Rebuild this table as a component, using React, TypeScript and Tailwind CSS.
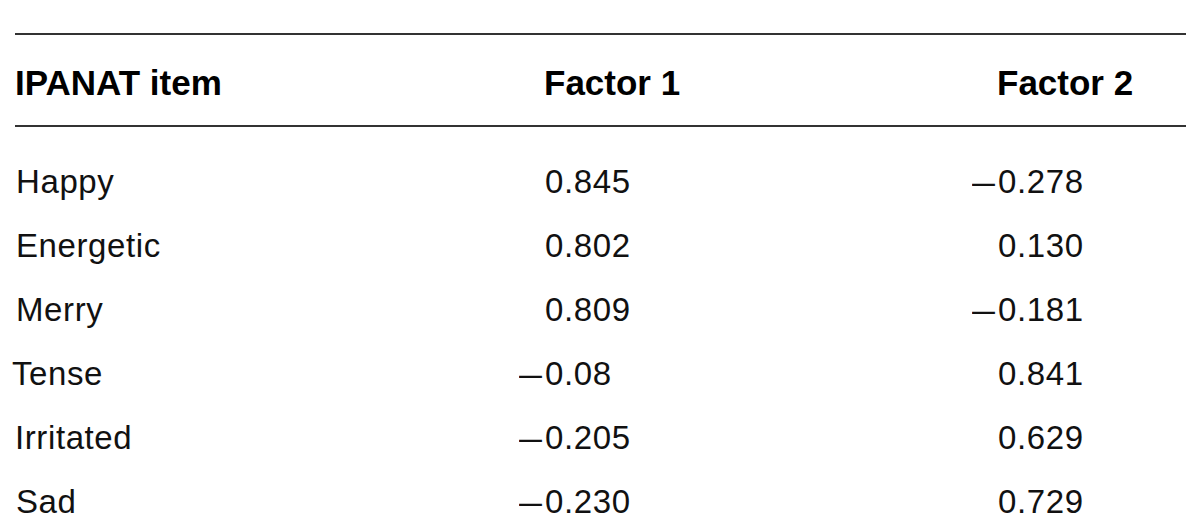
const rows = [
  { item: 'Happy', pad: 'pl-[1px]', f1: '0.845', n1: false, f2: '0.278', n2: true },
  { item: 'Energetic', pad: 'pl-[1px]', f1: '0.802', n1: false, f2: '0.130', n2: false },
  { item: 'Merry', pad: 'pl-[1px]', f1: '0.809', n1: false, f2: '0.181', n2: true },
  { item: 'Tense', pad: 'pl-0 -ml-[3px]', f1: '0.08', n1: true, f2: '0.841', n2: false },
  { item: 'Irritated', pad: 'pl-0', f1: '0.205', n1: true, f2: '0.629', n2: false },
  { item: 'Sad', pad: 'pl-[1px]', f1: '0.230', n1: true, f2: '0.729', n2: false },
];

function Num({ value, negative }: { value: string; negative: boolean }) {
  return (
    <div className="flex items-baseline">
      <span className="w-[26px] shrink-0 overflow-hidden">
        {negative ? <span className="inline-block origin-left scale-x-[1.25]">{'\u2013'}</span> : ''}
      </span>
      <span>{value}</span>
    </div>
  );
}

export default function App() {
  return (
    <div className="min-h-[528px] w-[1200px] bg-white pt-[33px] font-['Liberation_Sans',Arial,sans-serif] text-[#111]">
      <div className="ml-[15px] w-[1171px] border-t-2 border-[#333]">
        <div className="grid h-[92px] grid-cols-[504px_453px_1fr] border-b-2 border-[#333] pt-[6px] text-[35px] font-bold leading-[84px] text-black">
          <div className="pl-0">IPANAT item</div>
          <div className="pl-[25px]">Factor 1</div>
          <div className="pl-[25px]">Factor 2</div>
        </div>
        <div className="pt-[23px] text-[33px] leading-[64px] tracking-[0.6px]">
          {rows.map((r) => (
            <div key={r.item} className="grid grid-cols-[504px_453px_1fr]">
              <div className={r.pad}>{r.item}</div>
              <Num value={r.f1} negative={r.n1} />
              <Num value={r.f2} negative={r.n2} />
            </div>
          ))}
        </div>
      </div>
    </div>
  );
}
